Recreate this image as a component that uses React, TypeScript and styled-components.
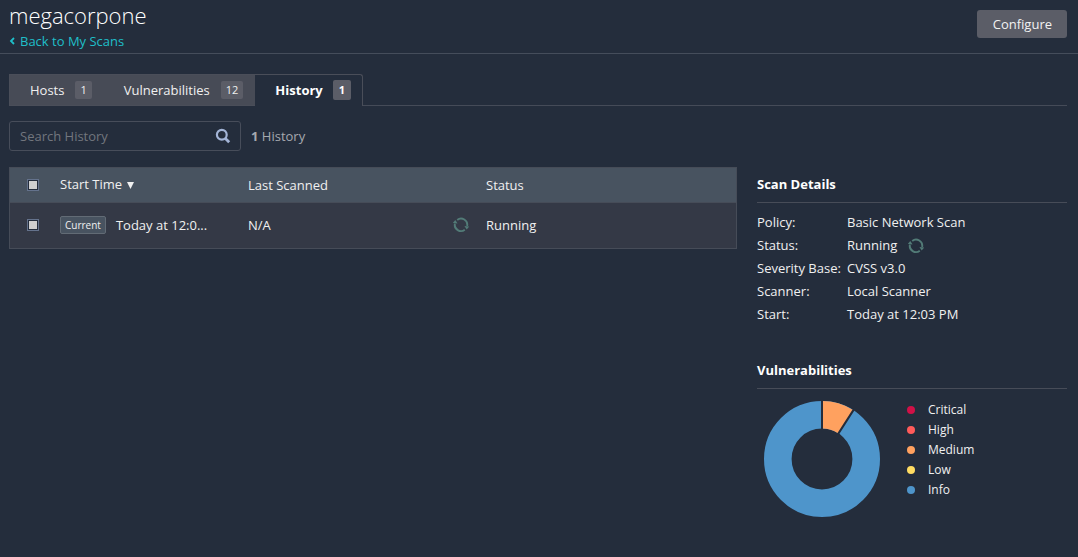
import React from "react";
import styled, { createGlobalStyle } from "styled-components";

const GlobalStyle = createGlobalStyle`
  * { box-sizing: border-box; }
  body {
    margin: 0;
    background: #242d3c;
    color: #f0f0f0;
    font-family: "Open Sans", sans-serif;
    font-size: 13px;
    line-height: 20px;
  }
  button, input { font: inherit; color: inherit; }
`;

const Header = styled.header`
  display: flex;
  justify-content: space-between;
  align-items: flex-start;
  padding: 0 11px 2px 9px;
  border-bottom: 1px solid #454d5b;
`;

const Title = styled.h1`
  margin: 0;
  font-size: 22px;
  font-weight: 300;
  line-height: 30px;
  color: #fff;
`;

const BackLink = styled.a`
  display: flex;
  align-items: center;
  gap: 4px;
  padding-top: 1px;
  color: #1fbfc9;
  text-decoration: none;
`;

const ConfigureButton = styled.button`
  margin-top: 10px;
  padding: 4px 15px 4px 16px;
  border: 0;
  border-radius: 3px;
  background: #5b5d67;
  color: #f2f2f2;
`;

const Main = styled.main`
  padding: 20px 11px 20px 9px;
`;

const Tabs = styled.nav`
  display: flex;
  height: 32px;
`;

const TabFiller = styled.div`
  flex: 1;
  border-bottom: 1px solid #454b58;
`;

const Tab = styled.button<{ $active?: boolean }>`
  display: flex;
  align-items: center;
  gap: ${(p) => (p.$active ? "10px" : "11px")};
  padding: ${(p) => (p.$active ? "0 11px 1px 20px" : "0 12px 0 20px")};
  border: 1px solid #4a4e59;
  border-width: ${(p) => (p.$active ? "1px 1px 0 0" : "1px 0 1px 1px")};
  border-top-right-radius: ${(p) => (p.$active ? "3px" : "0")};
  background: ${(p) => (p.$active ? "transparent" : "#474b56")};
  color: ${(p) => (p.$active ? "#fff" : "#f0f0f0")};
  font-weight: ${(p) => (p.$active ? 700 : 400)};

  & + & { border-left-width: 0; }
`;

const Count = styled.span<{ $active?: boolean }>`
  padding: ${(p) => (p.$active ? "1px 6px" : "0 5px")};
  border-radius: 2px;
  background: #5b5d67;
  font-size: 11px;
  line-height: 18px;
`;

const Toolbar = styled.div`
  display: flex;
  align-items: center;
  gap: 10px;
  margin: 15px 0 16px;
  color: #a6a9af;
`;

const SearchBox = styled.label`
  display: flex;
  align-items: center;
  width: 232px;
  height: 30px;
  padding: 0 9px 0 10px;
  border: 1px solid #474d5a;
  border-radius: 3px;
`;

const SearchInput = styled.input`
  flex: 1;
  min-width: 0;
  padding: 0;
  border: 0;
  outline: 0;
  background: transparent;
  &::placeholder { color: #72767e; opacity: 1; }
`;

const Columns = styled.div`
  display: flex;
  align-items: flex-start;
  gap: 20px;
`;

const Table = styled.table`
  flex: 1;
  min-width: 0;
  table-layout: fixed;
  border-collapse: separate;
  border-spacing: 0;
  border: 1px solid #464c58;
  background: #343946;
`;

const HeadCell = styled.th<{ $width?: number }>`
  width: ${(p) => (p.$width ? `${p.$width}px` : "auto")};
  height: 35px;
  padding: 0;
  border-bottom: 1px solid #464c58;
  background: #485360;
  font-weight: 400;
  text-align: left;
`;

const Cell = styled.td`
  height: 45px;
  padding: 0 0 2px;
`;

const StartCell = styled.div`
  display: flex;
  align-items: center;
  gap: 10px;
`;

const CurrentTag = styled.span`
  padding: 0 4px;
  border: 1px solid #626b75;
  border-radius: 2px;
  background: #485360;
  font-size: 10px;
  line-height: 16px;
`;

const SortButton = styled.button`
  display: flex;
  align-items: center;
  gap: 5px;
  padding: 0 0 2px;
  border: 0;
  background: none;
`;

const Checkbox = styled.input`
  appearance: none;
  display: block;
  width: 12px;
  height: 12px;
  margin: 0 0 0 17px;
  border: 1px solid #64728c;
  padding: 1px;
  background: #cfcfcf content-box;
  box-shadow: inset 0 0 0 1px #242d3c;
`;

const Sidebar = styled.aside`
  width: 310px;
  padding-top: 7px;
`;

const SectionTitle = styled.h2`
  margin: 0 0 8px;
  padding-bottom: 8px;
  border-bottom: 1px solid #474c58;
  color: #fff;
  font-size: 13px;
  line-height: 20px;
`;

const Details = styled.dl`
  display: grid;
  grid-template-columns: 90px 1fr;
  margin: 0 0 34px;
  line-height: 23px;
`;

const Term = styled.dt`
  white-space: nowrap;
`;

const Value = styled.dd`
  display: flex;
  align-items: center;
  gap: 11px;
  margin: 0;
`;

const ChartRow = styled.div`
  display: flex;
  gap: 27px;
  padding: 4px 0 0 7px;
`;

const Legend = styled.ul`
  margin: -1px 0 0;
  padding: 0;
  list-style: none;
  font-size: 12px;
`;

const LegendItem = styled.li<{ $color: string }>`
  display: flex;
  align-items: center;
  gap: 13px;
  &::before {
    content: "";
    width: 8px;
    height: 8px;
    border-radius: 50%;
    background: ${(p) => p.$color};
  }
`;

const Block = styled.svg`
  display: block;
  flex: none;
`;

const RunningIcon = () => (
  <Block width="16" height="16" viewBox="0 0 16 16" aria-hidden="true">
    <g fill="none" stroke="#527b77" strokeWidth="1.9">
      <path d="M4.2 2.9A6.2 6.2 0 0 1 14.1 9" />
      <path d="M11.8 12.7A6.2 6.2 0 0 1 1.9 6.6" />
    </g>
    <path d="M13.7 12.6L11.4 9L16.2 9.6Z" fill="#527b77" />
    <path d="M2.3 3L4.6 6.6L-.2 6Z" fill="#527b77" />
  </Block>
);

const SearchIcon = () => (
  <Block width="16" height="16" viewBox="0 0 16 16" aria-hidden="true">
    <g fill="none" stroke="#a3b4d6">
      <circle cx="6.8" cy="6.8" r="4.9" strokeWidth="2.2" />
      <path d="M10.4 10.4L14.2 14.2" strokeWidth="2.8" />
    </g>
  </Block>
);

const Donut = () => (
  <Block width="116" height="116" viewBox="-58 -58 116 116" role="img" aria-label="Vulnerabilities by severity">
    <circle r="44.2" fill="none" stroke="#4e95cb" strokeWidth="27.6" />
    <path d="M0 -58V-30.4A30.4 30.4 0 0 1 16.4 -25.6L31.4 -48.8A58 58 0 0 0 0 -58Z" fill="#ffa15f" />
    <path d="M0 -59V-29M15.7 -24.4L31.9 -49.6" stroke="#242d3c" strokeWidth="2" />
  </Block>
);

const severities = [
  { name: "Critical", color: "#d01147" },
  { name: "High", color: "#ff5b5a" },
  { name: "Medium", color: "#ffa15f" },
  { name: "Low", color: "#ffdc62" },
  { name: "Info", color: "#4e95cb" },
];

export default function App() {
  return (
    <>
      <GlobalStyle />
      <Header>
        <div>
          <Title>megacorpone</Title>
          <BackLink href="#scans">
            <Block width="7" height="8" viewBox="0 0 7 8" aria-hidden="true">
              <path d="M5 1L2 4L5 7" fill="none" stroke="currentColor" strokeWidth="1.8" />
            </Block>
            Back to My Scans
          </BackLink>
        </div>
        <ConfigureButton type="button">Configure</ConfigureButton>
      </Header>
      <Main>
        <Tabs>
          <Tab type="button">Hosts <Count>1</Count></Tab>
          <Tab type="button">Vulnerabilities <Count>12</Count></Tab>
          <Tab type="button" $active>History <Count $active>1</Count></Tab>
          <TabFiller />
        </Tabs>
        <Toolbar>
          <SearchBox>
            <SearchInput type="text" placeholder="Search History" aria-label="Search History" />
            <SearchIcon />
          </SearchBox>
          <span><b>1</b> History</span>
        </Toolbar>
        <Columns>
          <Table>
            <thead>
              <tr>
                <HeadCell $width={50}><Checkbox type="checkbox" aria-label="Select all" /></HeadCell>
                <HeadCell $width={188}>
                  <SortButton type="button">
                    Start Time
                    <Block width="7" height="10" viewBox="0 0 7 10" aria-hidden="true">
                      <path d="M0 3H7L3.5 10Z" fill="currentColor" />
                    </Block>
                  </SortButton>
                </HeadCell>
                <HeadCell $width={205}>Last Scanned</HeadCell>
                <HeadCell $width={33} />
                <HeadCell>Status</HeadCell>
              </tr>
            </thead>
            <tbody>
              <tr>
                <Cell><Checkbox type="checkbox" aria-label="Select scan" /></Cell>
                <Cell>
                  <StartCell>
                    <CurrentTag>Current</CurrentTag>
                    <span>Today at 12:0...</span>
                  </StartCell>
                </Cell>
                <Cell>N/A</Cell>
                <Cell><RunningIcon /></Cell>
                <Cell>Running</Cell>
              </tr>
            </tbody>
          </Table>
          <Sidebar>
            <SectionTitle>Scan Details</SectionTitle>
            <Details>
              <Term>Policy:</Term><Value>Basic Network Scan</Value>
              <Term>Status:</Term><Value>Running <RunningIcon /></Value>
              <Term>Severity Base:</Term><Value>CVSS v3.0</Value>
              <Term>Scanner:</Term><Value>Local Scanner</Value>
              <Term>Start:</Term><Value>Today at 12:03 PM</Value>
            </Details>
            <SectionTitle>Vulnerabilities</SectionTitle>
            <ChartRow>
              <Donut />
              <Legend>
                {severities.map((s) => (
                  <LegendItem key={s.name} $color={s.color}>{s.name}</LegendItem>
                ))}
              </Legend>
            </ChartRow>
          </Sidebar>
        </Columns>
      </Main>
    </>
  );
}
